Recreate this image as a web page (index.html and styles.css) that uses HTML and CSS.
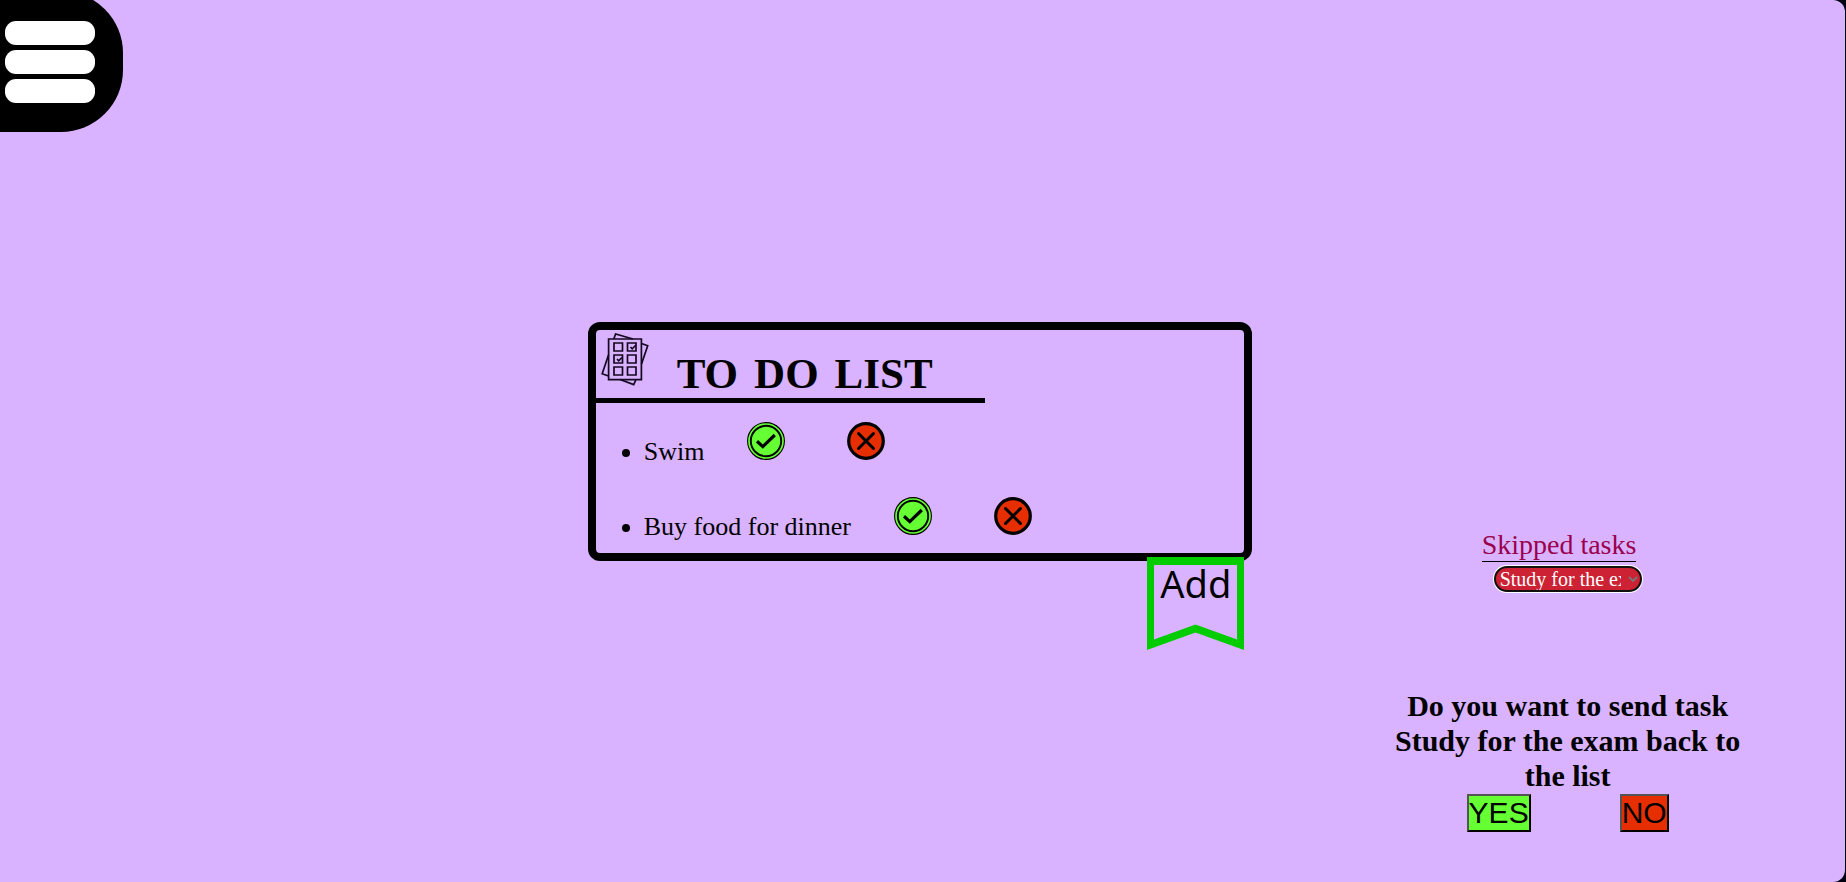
FILE: index.html
```html
<!DOCTYPE html>
<html lang="en">
<head>
<meta charset="utf-8">
<title>To do list</title>
<link rel="stylesheet" href="styles.css">
</head>
<body>
<svg class="sprites" aria-hidden="true">
  <symbol id="check" viewBox="0 0 38 38">
    <circle cx="19" cy="19" r="18.4" fill="#66ff33" stroke="#000" stroke-width="1.1"/>
    <circle cx="19" cy="19" r="15.2" fill="none" stroke="#000" stroke-width="1.9"/>
    <path d="M10 19.3L15.8 24.6L27.8 13" fill="none" stroke="#000" stroke-width="3.2"/>
  </symbol>
  <symbol id="cross" viewBox="0 0 38 38">
    <circle cx="19" cy="19" r="17.3" fill="#e62e00" stroke="#000" stroke-width="3.2"/>
    <path d="M11.5 11.5L26.5 26.5M26.5 11.5L11.5 26.5" fill="none" stroke="#000" stroke-width="3" stroke-linecap="round"/>
  </symbol>
</svg>
<div class="page">
  <button class="menu" type="button" aria-label="Menu">
    <span class="bar"></span>
    <span class="bar"></span>
    <span class="bar"></span>
  </button>
  <main class="card">
    <header class="card-header">
      <svg class="sheets" viewBox="0 0 48 53" fill="none" stroke="#15081f" stroke-width="1.7" aria-hidden="true">
        <path d="M12.8 6L14.6 1L32 6M40.5 10.5L46.7 12.7L40.5 31M7.5 22L1.2 40.8L7.5 43M19 46.5L32.7 51.6L35 46.5"/>
        <path d="M7.6 6H40.4V46.6H7.6Z"/>
        <path d="M13 10H21.5V18H13ZM26.5 10H35V18H26.5ZM13 22H21.5V30H13ZM26.5 22H35V30H26.5ZM13 34H21.5V42H13ZM26.5 34H35V42H26.5Z"/>
        <path d="M29.5 14L31.2 15.8L34.5 12.5M16 26L17.7 27.8L21 24.5"/>
      </svg>
      <h1 class="title"><span>TO</span> <span>DO</span> <span>LIST</span></h1>
    </header>
    <ul class="tasks">
      <li class="task"><span>Swim</span><button class="mark" type="button" aria-label="Complete Swim"><svg><use href="#check"/></svg></button><button class="mark skip" type="button" aria-label="Skip Swim"><svg><use href="#cross"/></svg></button></li>
      <li class="task"><span>Buy food for dinner</span><button class="mark" type="button" aria-label="Complete Buy food for dinner"><svg><use href="#check"/></svg></button><button class="mark skip" type="button" aria-label="Skip Buy food for dinner"><svg><use href="#cross"/></svg></button></li>
    </ul>
    <button class="add" type="button">
      <svg class="ribbon" viewBox="0 0 97 93" aria-hidden="true"><path fill="#00cc00" fill-rule="evenodd" d="M0 0H97V93L48.500 75.500L0 93ZM7 8V82.500L48.500 67.500L90 82.500V8Z"/></svg>
      <span class="add-text">Add</span>
    </button>
  </main>
  <aside class="side">
    <div class="skipped">
      <label class="skipped-label" for="skipped">Skipped tasks</label>
      <div class="picker">
        <select class="picker-select" id="skipped"><option>Study for the exam</option></select>
        <svg class="chevron" viewBox="0 0 10 6" fill="none" stroke="#777" stroke-width="1.8" aria-hidden="true"><path d="M1 1L5 5L9 1"/></svg>
      </div>
    </div>
    <h2 class="question">Do you want to send task Study for the exam back to the list</h2>
    <div class="answers">
      <button class="answer yes" type="button">YES</button>
      <button class="answer no" type="button">NO</button>
    </div>
  </aside>
</div>
</body>
</html>
```
FILE: styles.css
```css
* { box-sizing: border-box; }
body {
  margin: 0;
  background: #00000f;
  font-family: "Liberation Serif", serif;
  color: #000;
}
button { cursor: pointer; color: #000; }
.sprites { display: none; }
.page {
  min-height: 100vh;
  margin-right: 1px;
  padding-right: 5px;
  display: grid;
  grid-template-columns: 1fr 36vw 1fr;
  background: #d9b3ff;
  border-radius: 0 12px 12px 0;
  overflow: hidden;
}
.menu {
  align-self: start;
  justify-self: start;
  display: flex;
  flex-direction: column;
  gap: 5px;
  width: 123px;
  margin-top: -9px;
  padding: 30px 28px 29px 5px;
  border: 0;
  border-radius: 0 62px 62px 0;
  background: #000;
}
.bar {
  height: 24px;
  border-radius: 11px;
  background: #fff;
}
.card {
  position: relative;
  align-self: center;
  border: 8px solid #000;
  border-radius: 12px;
}
.card-header {
  display: flex;
  gap: 28px;
  width: 60%;
  padding-left: 5px;
  border-bottom: 5px solid #000;
}
.sheets {
  flex: none;
  width: 48px;
  height: 53px;
  margin-top: 3px;
}
.title {
  display: flex;
  gap: 16px;
  margin: 20px 0 0;
  font-size: 43px;
  line-height: 48px;
  white-space: nowrap;
}
.tasks {
  margin: 0;
  padding-left: 48px;
  font-size: 26px;
  line-height: 30px;
}
.task { padding: 19px 0 11px; }
.mark {
  width: 38px;
  height: 38px;
  margin-left: 43px;
  padding: 0;
  border: 0;
  background: none;
  vertical-align: baseline;
}
.mark svg {
  display: block;
  width: 38px;
  height: 38px;
}
.skip { margin-left: 62px; }
.add {
  position: absolute;
  top: calc(100% + 4px);
  right: 0;
  width: 97px;
  height: 93px;
  padding: 0;
  border: 0;
  background: none;
  font: 38px/52px "Noto Sans", sans-serif;
  display: grid;
  align-items: start;
}
.ribbon, .add-text { grid-area: 1 / 1; }
.ribbon { width: 97px; height: 93px; }
.side {
  display: flex;
  flex-direction: column;
  justify-content: flex-end;
  align-items: center;
  padding: 0 0 50px 43px;
}
.skipped {
  display: flex;
  flex-direction: column;
  align-items: flex-start;
  gap: 4px;
  width: 172px;
}
.skipped-label {
  border-bottom: 1px solid #000;
  font-size: 28px;
  line-height: 32px;
  color: #99004d;
}
.picker {
  display: grid;
  align-items: center;
  margin-left: 12px;
}
.picker-select {
  grid-area: 1 / 1;
  appearance: none;
  width: 148px;
  height: 26px;
  padding: 0 19px 0 4px;
  border: 2px solid #101010;
  border-radius: 13px;
  box-shadow: 0 0 0 1px #fff;
  background: #cc2233;
  color: #fff;
  font: 20px/22px "Liberation Serif", serif;
}
.chevron {
  grid-area: 1 / 1;
  justify-self: end;
  width: 10px;
  height: 6px;
  margin-right: 4px;
  pointer-events: none;
}
.question {
  width: 370px;
  margin: 96px 0 1px;
  font-size: 30px;
  line-height: 35px;
  text-align: center;
}
.answers { display: flex; gap: 89px; }
.answer {
  padding: 0;
  border: 2px outset #000;
  font: 30px/34px "Liberation Sans", sans-serif;
}
.yes { background: #66ff33; }
.no { background: #e62e00; }
```
